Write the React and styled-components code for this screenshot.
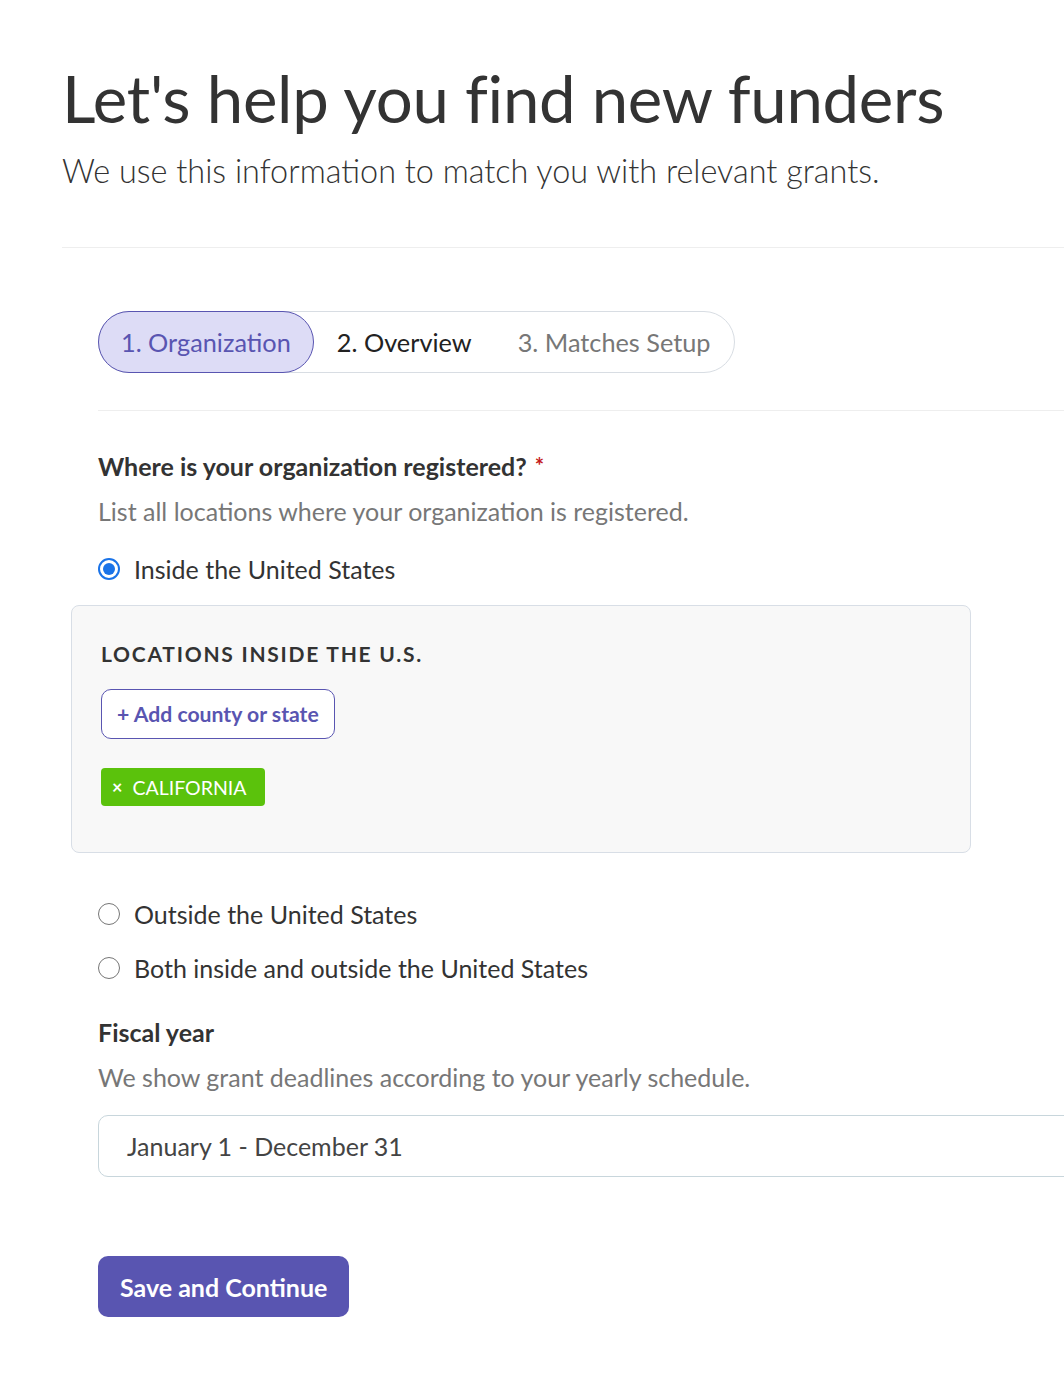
import React from 'react';
import styled, { createGlobalStyle } from 'styled-components';

const GlobalStyle = createGlobalStyle`
  body {
    margin: 0;
    background: #fff;
    font-family: Lato, "Noto Sans", sans-serif;
    color: #333;
    overflow-x: hidden;
  }
`;

export default function App() {
  return (
    <Page>
      <GlobalStyle />
      <Header>
        <h1>Let's help you find new funders</h1>
        <p>We use this information to match you with relevant grants.</p>
      </Header>
      <Divider />
      <Form>
        <Steps>
          <Step active>1. Organization</Step>
          <Step done>2. Overview</Step>
          <Step>3. Matches Setup</Step>
        </Steps>
        <Divider inner />
        <Question>
          Where is your organization registered? <span>*</span>
        </Question>
        <Hint>List all locations where your organization is registered.</Hint>
        <RadioRow gap={26}>
          <Radio checked />
          <span>Inside the United States</span>
        </RadioRow>
        <LocationBox>
          <BoxTitle>Locations inside the U.S.</BoxTitle>
          <AddButton>+ Add county or state</AddButton>
          <Tag>
            <span>×</span> CALIFORNIA
          </Tag>
        </LocationBox>
        <RadioRow gap={45}>
          <Radio />
          <span>Outside the United States</span>
        </RadioRow>
        <RadioRow gap={22}>
          <Radio />
          <span>Both inside and outside the United States</span>
        </RadioRow>
        <Question fiscal>Fiscal year</Question>
        <Hint>We show grant deadlines according to your yearly schedule.</Hint>
        <Select>January 1 - December 31</Select>
        <SaveButton>Save and Continue</SaveButton>
      </Form>
    </Page>
  );
}

const Page = styled.div`
  padding: 58px 0 60px 62px;
  width: 1200px;
`;

const Header = styled.div`
  padding-bottom: 56px;
  h1 {
    margin: 0;
    font-size: 65.3px;
    line-height: 80px;
    font-weight: 400;
    color: #333;
    letter-spacing: -0.3px;
  }
  p {
    margin: 13px 0 0;
    font-size: 32.4px;
    line-height: 40px;
    font-weight: 300;
    color: #333;
  }
`;

const Divider = styled.div`
  height: 1px;
  background: #eeeeee;
  margin: ${p => (p.inner ? '37px 0 39px' : '0')};
`;

const Form = styled.div`
  padding: 63px 0 0 36px;
`;

const Steps = styled.div`
  display: inline-flex;
  align-items: center;
  height: 60px;
  border: 1px solid #d8dde3;
  border-radius: 31px;
`;

const Step = styled.div`
  height: 60px;
  display: flex;
  align-items: center;
  font-size: 25.3px;
  padding: ${p => (p.active ? '0 22px' : '0 23px')};
  border-radius: 31px;
  margin: ${p => (p.active ? '-1px 0 -1px -1px' : '0')};
  border: ${p => (p.active ? '1px solid #5955b1' : 'none')};
  background: ${p => (p.active ? '#dddcf6' : 'transparent')};
  color: ${p => (p.active ? '#5955b1' : p.done ? '#222' : '#777')};
`;

const Question = styled.div`
  font-size: 25px;
  font-weight: 700;
  color: #333;
  line-height: 32px;
  margin-top: ${p => (p.fiscal ? '32px' : '0')};
  span {
    color: #c41a1a;
    font-size: 22px;
    vertical-align: top;
    margin-left: 2px;
  }
`;

const Hint = styled.div`
  font-size: 25px;
  color: #777;
  line-height: 32px;
  margin-top: 13px;
`;

const RadioRow = styled.label`
  display: flex;
  align-items: center;
  gap: 14px;
  font-size: 25px;
  color: #333;
  line-height: 32px;
  margin-top: ${p => p.gap}px;
`;

const Radio = styled.span`
  width: 22px;
  height: 22px;
  box-sizing: border-box;
  border-radius: 50%;
  border: ${p => (p.checked ? '2px solid #1a73e8' : '1.5px solid #767676')};
  display: flex;
  align-items: center;
  justify-content: center;
  &::after {
    content: '';
    display: ${p => (p.checked ? 'block' : 'none')};
    width: 12px;
    height: 12px;
    border-radius: 50%;
    background: #1a73e8;
  }
`;

const LocationBox = styled.div`
  margin: 20px 0 0 -27px;
  width: 900px;
  box-sizing: border-box;
  background: #f8f8f8;
  border: 1px solid #d8dee6;
  border-radius: 8px;
  padding: 34px 29px 46px;
  display: flex;
  flex-direction: column;
  align-items: flex-start;
`;

const BoxTitle = styled.div`
  font-size: 21px;
  font-weight: 700;
  text-transform: uppercase;
  letter-spacing: 1.75px;
  color: #333;
  line-height: 28px;
`;

const AddButton = styled.button`
  margin-top: 21px;
  height: 50px;
  padding: 0 15px;
  border: 1px solid #5955b1;
  border-radius: 10px;
  background: #fff;
  color: #5955b1;
  font-family: Lato, sans-serif;
  font-size: 21.2px;
  font-weight: 700;
`;

const Tag = styled.div`
  margin-top: 29px;
  height: 38px;
  display: flex;
  align-items: center;
  padding: 0 19px 0 11px;
  background: #5bc20c;
  border-radius: 4px;
  color: #fff;
  font-size: 19.5px;
  span {
    font-size: 18px;
    font-weight: 700;
    margin-right: 10px;
  }
`;

const Select = styled.div`
  margin-top: 22px;
  width: 1100px;
  height: 62px;
  box-sizing: border-box;
  border: 1px solid #c8d6dc;
  border-radius: 10px;
  display: flex;
  align-items: center;
  padding-left: 28px;
  font-size: 25px;
  color: #444;
`;

const SaveButton = styled.button`
  margin-top: 79px;
  height: 61px;
  padding: 0 22px;
  border: none;
  border-radius: 10px;
  background: #5955b1;
  color: #fff;
  font-family: Lato, sans-serif;
  font-size: 25px;
  font-weight: 700;
`;
